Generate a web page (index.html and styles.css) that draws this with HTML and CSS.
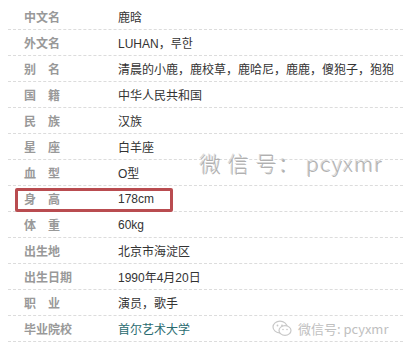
FILE: index.html
```html
<!DOCTYPE html>
<html lang="zh">
<head>
<meta charset="utf-8">
<link rel="stylesheet" href="styles.css">
</head>
<body>
<div class="card">
  <div class="info">
    <div class="row"><div class="label">中文名</div><div class="value">鹿晗</div></div>
    <div class="row"><div class="label">外文名</div><div class="value">LUHAN，루한</div></div>
    <div class="row"><div class="label">别　名</div><div class="value">清晨的小鹿，鹿校草，鹿哈尼，鹿鹿，傻狍子，狍狍</div></div>
    <div class="row"><div class="label">国　籍</div><div class="value">中华人民共和国</div></div>
    <div class="row"><div class="label">民　族</div><div class="value">汉族</div></div>
    <div class="row"><div class="label">星　座</div><div class="value">白羊座</div></div>
    <div class="row"><div class="label">血　型</div><div class="value">O型</div></div>
    <div class="row highlight"><div class="label">身　高</div><div class="value">178cm</div><div class="mark"></div></div>
    <div class="row"><div class="label">体　重</div><div class="value">60kg</div></div>
    <div class="row"><div class="label">出生地</div><div class="value">北京市海淀区</div></div>
    <div class="row"><div class="label">出生日期</div><div class="value">1990年4月20日</div></div>
    <div class="row"><div class="label">职　业</div><div class="value">演员，歌手</div></div>
    <div class="row"><div class="label">毕业院校</div><div class="value link">首尔艺术大学</div></div>
  </div>
  <div class="wm-big">微 信 号： pcyxmr</div>
  <div class="wm-small">
    <svg class="wm-icon" width="20" height="17" viewBox="0 0 20 17">
      <ellipse cx="8" cy="7" rx="7" ry="5.8" fill="none" stroke="#c8c8c8" stroke-width="1.2"/>
      <ellipse cx="13" cy="10.5" rx="6" ry="4.8" fill="#fff" stroke="#c8c8c8" stroke-width="1.2"/>
      <circle cx="5.5" cy="5.5" r="0.9" fill="#c8c8c8"/>
      <circle cx="10" cy="5.5" r="0.9" fill="#c8c8c8"/>
      <circle cx="11" cy="9.5" r="0.8" fill="#c8c8c8"/>
      <circle cx="15" cy="9.5" r="0.8" fill="#c8c8c8"/>
    </svg>
    <span>微信号: pcyxmr</span>
  </div>
</div>
</body>
</html>
```
FILE: styles.css
```css
html, body {
  margin: 0;
  padding: 0;
  background: #fff;
}
.card {
  position: relative;
  width: 403px;
  height: 350px;
  overflow: hidden;
  font-family: Arial, "Liberation Sans", "Noto Sans CJK SC", sans-serif;
  font-size: 12px;
}
.info {
  padding-top: 4px;
  margin-left: 8px;
}
.row {
  position: relative;
  display: grid;
  grid-template-columns: 94px 1fr;
  height: 25px;
  align-items: center;
  padding-left: 16px;
  border-bottom: 1px dashed #dcdcdc;
  white-space: nowrap;
}
.label {
  color: #999;
  font-weight: bold;
  font-family: "Noto Sans CJK SC", sans-serif;
  font-size: 12px;
}
.value {
  color: #333;
}
.link {
  color: #2a6b70;
}
.mark {
  position: absolute;
  left: 7px;
  top: 2px;
  width: 152px;
  height: 18px;
  border: 3px solid #b94c50;
  border-radius: 2px;
}
.wm-big {
  position: absolute;
  left: 200px;
  top: 148px;
  font-family: "Noto Sans CJK SC", sans-serif;
  font-weight: 300;
  font-size: 21px;
  letter-spacing: 1.2px;
  color: #b0b0b0;
  text-shadow: 1px 1px 0 #fff, -1px -1px 0 #d8d8d8;
  white-space: nowrap;
}
.wm-small {
  position: absolute;
  left: 272px;
  top: 319px;
  display: flex;
  align-items: center;
  gap: 6px;
  font-family: "Noto Sans CJK SC", sans-serif;
  font-size: 13px;
  color: #c0c0c0;
  white-space: nowrap;
}
.wm-icon {
  display: block;
}
```
